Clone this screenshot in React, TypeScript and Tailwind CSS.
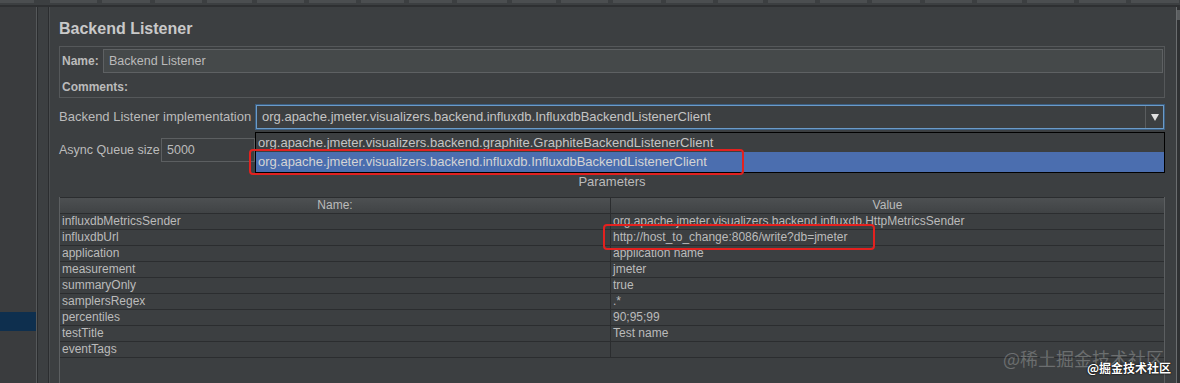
const params: [string, string][] = [
  ["influxdbMetricsSender", "org.apache.jmeter.visualizers.backend.influxdb.HttpMetricsSender"],
  ["influxdbUrl", "http://host_to_change:8086/write?db=jmeter"],
  ["application", "application name"],
  ["measurement", "jmeter"],
  ["summaryOnly", "true"],
  ["samplersRegex", ".*"],
  ["percentiles", "90;95;99"],
  ["testTitle", "Test name"],
  ["eventTags", ""],
];

const tabs = [34, 47, 48, 47, 45, 47, 47, 43, 43, 50, 44, 47, 48, 47, 45, 47, 47, 48, 47, 45, 47, 47, 48];

export default function App() {
  return (
    <div className="relative w-[1180px] h-[383px] bg-[#3c3f41] flex flex-col overflow-hidden font-['Liberation_Sans',Arial,'Noto_Sans_CJK_SC',sans-serif] text-[12px] text-[#bbbbbb]">
      {/* toolbar edge */}
      <div className="h-[7px] flex flex-col shrink-0">
        <div className="h-[3px] flex gap-[5px]">
          {tabs.map((w, i) => (
            <div key={i} className={`h-full bg-[#4b4e50] ${i === 0 ? "mr-[11px]" : ""}`} style={{ width: w }} />
          ))}
        </div>
        <div className="h-[2px]" />
        <div className="h-[2px] bg-[#2e3032]" />
      </div>

      <div className="flex flex-1 min-h-0">
        {/* tree panel */}
        <div className="w-[36px] bg-[#3a3c3e] flex flex-col">
          <div className="h-[305px]" />
          <div className="h-[19px] bg-[#0e2f4e]" />
        </div>
        <div className="w-[1px] bg-[#55585a]" />
        <div className="w-[1px] bg-[#2b2d2f]" />
        <div className="w-[10px]" />
        <div className="w-[1px] bg-[#2b2d2f]" />
        <div className="w-[1px] bg-[#4a4d4f]" />

        {/* editor */}
        <div className="flex-1 flex flex-col pl-[9px] pr-[11px]">
          <div className="mt-[12px] h-[20px] leading-[20px] text-[16px] font-bold text-[#c9c9c9]">Backend Listener</div>

          <div className="mt-[7px] h-[52px] border border-[#55585a] flex flex-col">
            <div className="flex items-center pt-[2px] pl-[2px]">
              <span className="w-[41px] font-bold">Name:</span>
              <div className="flex-1 mr-[1px] h-[24px] bg-[#45494a] border border-[#5e6163] flex items-center pl-[5px] text-[12.5px]">
                Backend Listener
              </div>
            </div>
            <div className="flex-1 flex items-center pl-[2px] pt-[3px] font-bold">Comments:</div>
          </div>

          <div className="relative mt-[7px] h-[24px] flex items-center">
            <span className="w-[197px] text-[13px]">Backend Listener implementation</span>
            <div className="flex-1 mr-[1px] h-[24px] border border-[#6b9bc8] shadow-[0_0_0_1px_#3b5f83] flex items-stretch bg-[#3c3f41]">
              <div className="flex-1 flex items-center pl-[5px] text-[13px] text-[#c4c4c4]">
                org.apache.jmeter.visualizers.backend.influxdb.InfluxdbBackendListenerClient
              </div>
              <div className="w-[18px] border-l border-[#5a5d5f] flex items-center justify-center">
                <svg width="8" height="7" viewBox="0 0 8 7">
                  <path d="M0 0 H8 L4 7 Z" fill="#e0e0e0" />
                </svg>
              </div>
            </div>

            {/* open list */}
            <div className="absolute left-[196px] top-[27px] w-[910px] border border-black bg-[#3c3f41] z-10 text-[13px]">
              <div className="h-[19px] flex items-center pl-[2px] text-[#c4c4c4]">
                org.apache.jmeter.visualizers.backend.graphite.GraphiteBackendListenerClient
              </div>
              <div className="h-[20px] flex items-center pl-[2px] bg-[#4b6eaf] text-[#d4d4d4]">
                org.apache.jmeter.visualizers.backend.influxdb.InfluxdbBackendListenerClient
              </div>
            </div>
            <div className="absolute left-[190px] top-[44px] w-[495px] h-[26px] border-[2.5px] border-[#e3211f] rounded-[4px] z-20" />
          </div>

          <div className="mt-[9px] h-[24px] flex items-center">
            <span className="w-[102px] text-[12.5px]">Async Queue size</span>
            <div className="w-[94px] h-[24px] border border-[#5c5f61] flex items-center pl-[5px] text-[12.5px]">5000</div>
          </div>

          <div className="mt-[10px] h-[20px] leading-[20px] text-center text-[13px]">Parameters</div>

          <div className="mt-[5px] flex-1 border-l border-r border-[#5c5f61] flex flex-col">
            <div className="h-[17px] flex bg-linear-to-b from-[#4d5052] to-[#404345] border-t border-b border-[#2b2d2f]">
              <div className="w-[551px] border-r border-[#2b2d2f] text-center leading-[15px]">Name:</div>
              <div className="flex-1 text-center leading-[15px]">Value</div>
            </div>
            {params.map(([name, value]) => (
              <div key={name} className="h-[16px] flex border-b border-[#2b2d2f]">
                <div className="w-[551px] border-r border-[#2b2d2f] pl-[2px] leading-[15px]">{name}</div>
                <div className="relative flex-1 pl-[2px] leading-[15px]">
                  {value}
                  {name === "influxdbUrl" && (
                    <div className="absolute left-[-8px] top-[-6px] w-[272px] h-[26px] border-[2.5px] border-[#e3211f] rounded-[4px] z-20" />
                  )}
                </div>
              </div>
            ))}
          </div>
        </div>

        <div className="w-[1px] bg-[#6a6d6f]" />
        <div className="w-[3px] bg-[#2f3133] flex flex-col">
          <div className="mt-[3px] h-[10px] bg-[#5a5d5f]" />
        </div>
      </div>

      {/* watermarks */}
      <div className="absolute left-[1003px] top-[348px] text-[18px] leading-[20px] text-white/25 font-['Noto_Sans_CJK_SC',sans-serif]">
        @稀土掘金技术社区
      </div>
      <div className="absolute left-[1087px] top-[361px] text-[12px] leading-[14px] font-bold text-white font-['Noto_Sans_CJK_SC',sans-serif] [text-shadow:0_0_2px_#000,0_0_1px_#000]">
        @掘金技术社区
      </div>
    </div>
  );
}
